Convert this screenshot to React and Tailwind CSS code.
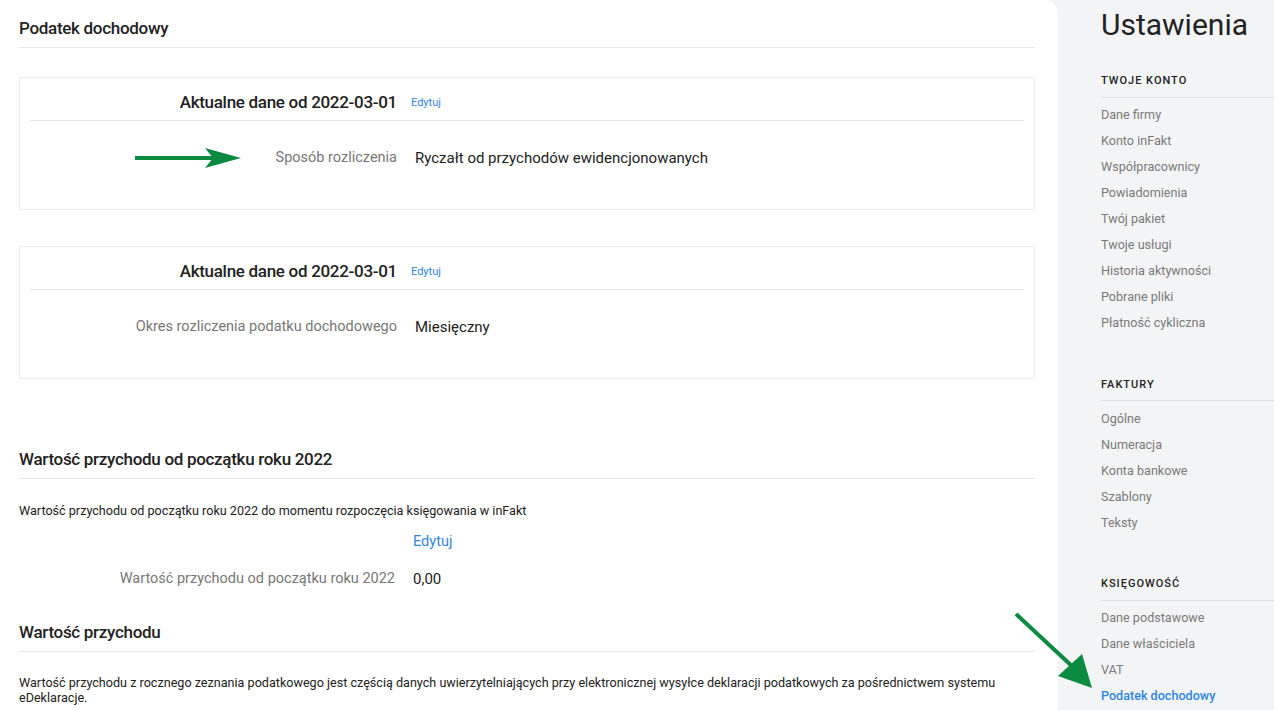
import React from "react";

const sections = [
  {
    title: "TWOJE KONTO",
    items: [
      "Dane firmy",
      "Konto inFakt",
      "Współpracownicy",
      "Powiadomienia",
      "Twój pakiet",
      "Twoje usługi",
      "Historia aktywności",
      "Pobrane pliki",
      "Płatność cykliczna",
    ],
  },
  {
    title: "FAKTURY",
    items: ["Ogólne", "Numeracja", "Konta bankowe", "Szablony", "Teksty"],
  },
  {
    title: "KSIĘGOWOŚĆ",
    items: ["Dane podstawowe", "Dane właściciela", "VAT", "Podatek dochodowy"],
  },
];

const DataCard = ({ label, value, arrow }) => (
  <div className="border border-[#ececec] px-[10px] h-[133px]">
    <div className="flex items-center h-[43px] pt-[7px] border-b border-[#e5e5e5]">
      <div className="w-[367px] text-right text-[17px] font-medium tracking-[-0.3px] text-[#222]">
        Aktualne dane od 2022-03-01
      </div>
      <a className="ml-[14px] text-[11px] text-[#2f86e0] mt-[2px]">Edytuj</a>
    </div>
    <div className="flex items-center h-[74px] relative">
      {arrow && (
        <svg
          className="absolute left-[105px] top-[27px]"
          width="106"
          height="20"
          viewBox="0 0 106 20"
        >
          <rect x="0" y="8" width="80" height="4" fill="#0b8a42" />
          <polygon points="70,0 106,10 70,20 78,10" fill="#0b8a42" />
        </svg>
      )}
      <div className="w-[367px] text-right text-[14.5px] text-[#777]">{label}</div>
      <div className="ml-[18px] text-[15px] text-[#222]">{value}</div>
    </div>
  </div>
);

const SectionTitle = ({ children }) => (
  <div className="h-[38px] flex items-center border-b border-[#e6e6e6] text-[17px] font-medium tracking-[-0.3px] text-[#222]">
    {children}
  </div>
);

export default function App() {
  return (
    <div
      className="flex w-[1274px] h-[710px] overflow-hidden bg-[#f3f4f6] relative"
      style={{ fontFamily: "Roboto, 'Liberation Sans', sans-serif" }}
    >
      <main className="w-[1058px] bg-white rounded-tr-[14px] px-[19px] pt-[10px] shrink-0">
        <div className="w-[1016px]">
          <SectionTitle>Podatek dochodowy</SectionTitle>
          <div className="mt-[29px]">
            <DataCard
              label="Sposób rozliczenia"
              value="Ryczałt od przychodów ewidencjonowanych"
              arrow
            />
          </div>
          <div className="mt-[36px]">
            <DataCard
              label="Okres rozliczenia podatku dochodowego"
              value="Miesięczny"
            />
          </div>
          <div className="mt-[62px]">
            <SectionTitle>Wartość przychodu od początku roku 2022</SectionTitle>
          </div>
          <p className="mt-[23px] text-[12.6px] text-[#222]">
            Wartość przychodu od początku roku 2022 do momentu rozpoczęcia księgowania w inFakt
          </p>
          <div className="mt-[10px] pl-[394px] text-[14.5px] text-[#2f86e0]">Edytuj</div>
          <div className="flex mt-[15px]">
            <div className="w-[376px] text-right text-[14.5px] text-[#777]">
              Wartość przychodu od początku roku 2022
            </div>
            <div className="ml-[18px] text-[15px] text-[#222]">0,00</div>
          </div>
          <div className="mt-[24px]">
            <SectionTitle>Wartość przychodu</SectionTitle>
          </div>
          <p className="mt-[23px] w-[1000px] text-[12.6px] leading-[15px] text-[#222]">
            Wartość przychodu z rocznego zeznania podatkowego jest częścią danych uwierzytelniających przy elektronicznej wysyłce deklaracji podatkowych za pośrednictwem systemu eDeklaracje.
          </p>
        </div>
      </main>

      <aside className="flex-1 pl-[43px] pt-[4px]">
        <h1 className="text-[30px] text-[#222] leading-[42px]">Ustawienia</h1>
        {sections.map((s, i) => (
          <div key={s.title} className={i === 0 ? "mt-[27px]" : "mt-[40px]"}>
            <div className="text-[11px] font-medium tracking-[1px] text-[#222] pb-[7px] border-b border-[#dedfe1]">
              {s.title}
            </div>
            <ul className="mt-[5px]">
              {s.items.map((it) => (
                <li
                  key={it}
                  className={
                    "h-[26px] flex items-center text-[12.6px] " +
                    (it === "Podatek dochodowy"
                      ? "text-[#2f86e0] font-medium"
                      : "text-[#7a7a7a]")
                  }
                >
                  {it}
                </li>
              ))}
            </ul>
          </div>
        ))}
      </aside>

      <svg
        className="absolute left-[1012px] top-[610px]"
        width="82"
        height="80"
        viewBox="0 0 82 80"
      >
        <line x1="4" y1="4" x2="62" y2="58" stroke="#0b8a42" strokeWidth="4" />
        <polygon points="80,78 46,66 70,44" fill="#0b8a42" />
      </svg>
    </div>
  );
}
